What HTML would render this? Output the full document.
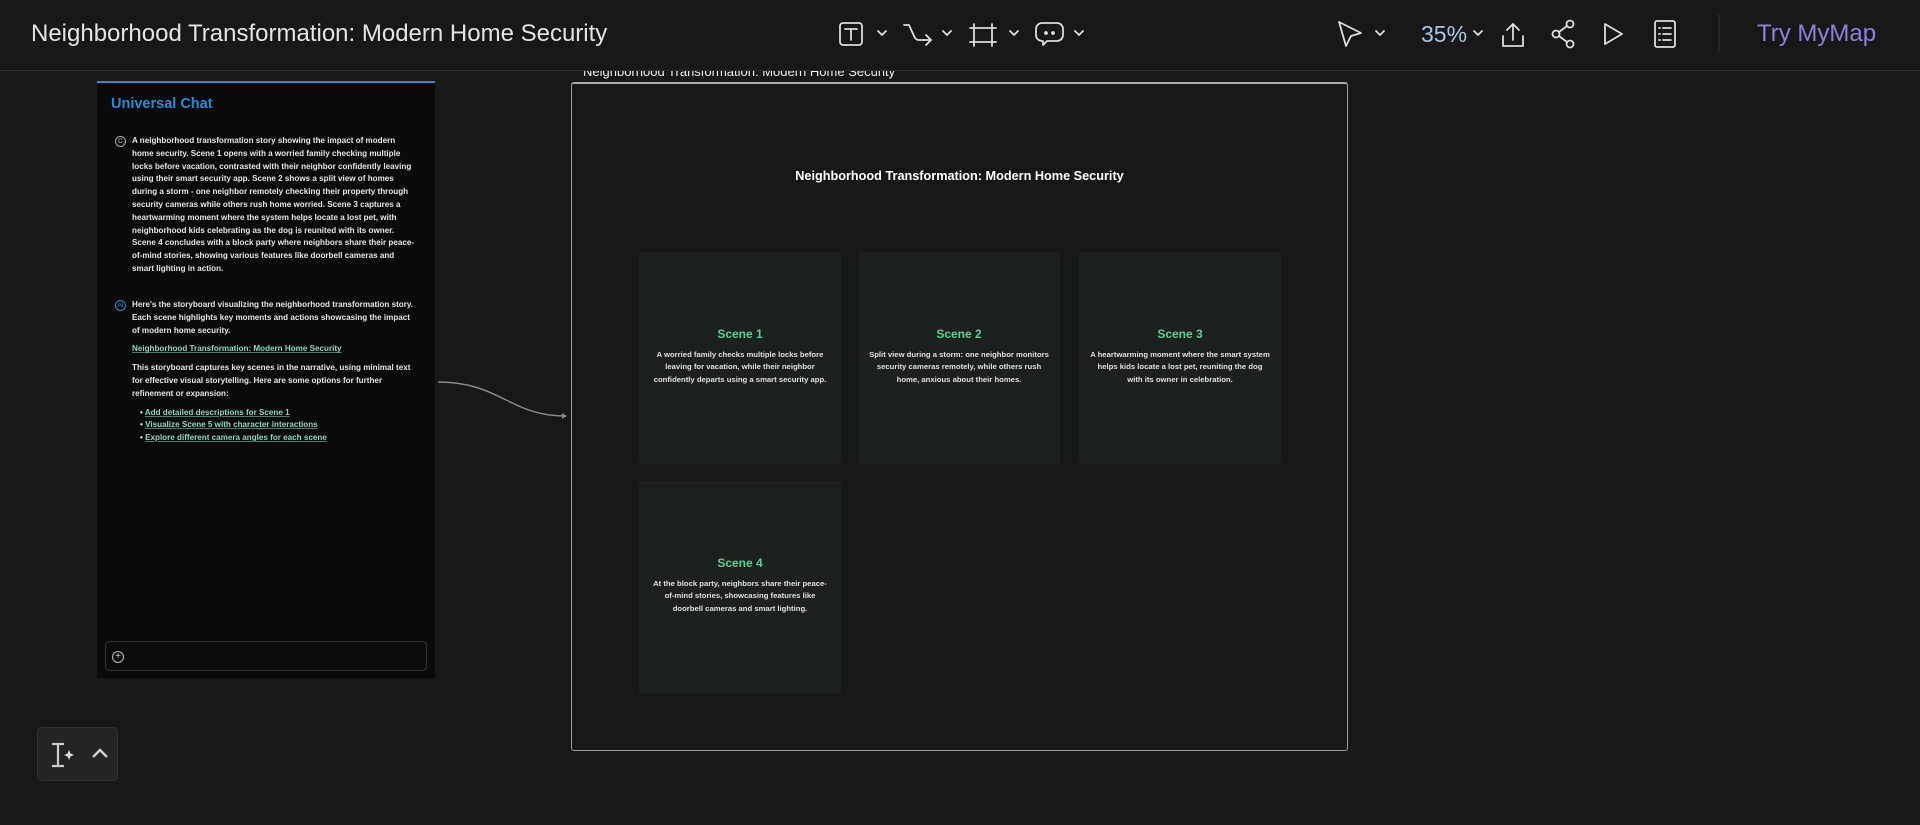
<!DOCTYPE html>
<html><head><meta charset="utf-8"><style>
*{margin:0;padding:0;box-sizing:border-box}
body{width:1920px;height:825px;background:#181818;font-family:"Liberation Sans",Arial,sans-serif;position:relative;overflow:hidden;color:#ddd}
.abs{position:absolute}
#hdr{left:0;top:0;width:1920px;height:71px;background:#181818;border-bottom:1px solid #2c2c2c;z-index:5}
.ttl{left:31px;top:20px;font-size:24px;color:#e4e4e4;white-space:nowrap}
svg{position:absolute;overflow:visible}
.chat{left:97px;top:81px;width:338px;height:597px;background:#0a0a0a;border-top:2px solid #2a8ad8}
.chat h3{position:absolute;left:14px;top:13px;font-size:14.5px;color:#2a8ad8;font-weight:bold}
.msg{position:absolute;left:35px;width:285px;font-size:8.1px;line-height:12.8px;color:#e6e6e6;font-weight:bold}
.lnk{color:#8fd6c3;text-decoration:underline;text-decoration-color:#4a7a6e}
.ic{position:absolute;left:-17px;top:1px;width:11px;height:11px;border:1px solid #aaa;border-radius:50%;font-size:6.5px;line-height:9px;text-align:center;font-weight:normal;color:#ccc}
.frame{left:571px;top:82px;width:777px;height:669px;border:1.5px solid #9a9a9a;border-top:2px solid #aaa;border-radius:3px;background:#181818}
.card{position:absolute;width:202px;height:212px;background:#1c201e;border-radius:2px;text-align:center}
.card h4{position:absolute;left:0;right:0;top:75px;font-size:12px;color:#5fcf8f;font-weight:bold}
.card p{position:absolute;left:10px;right:10px;top:97px;font-size:7.7px;line-height:12.4px;color:#e0e0e0;font-weight:bold}
</style></head><body>

<div class="abs" style="left:583px;top:64px;font-size:13px;color:#eee;white-space:nowrap;z-index:1">Neighborhood Transformation: Modern Home Security</div>
<div id="hdr" class="abs">
 <div class="abs ttl">Neighborhood Transformation: Modern Home Security</div>
 <svg width="1920" height="71" style="left:0;top:0" fill="none" stroke="#ddd" stroke-width="1.8" stroke-linecap="round" stroke-linejoin="round">
  <rect x="840" y="23" width="22" height="22" rx="3"/><path d="M845 29h12M851 29v11"/>
  <path d="M878 31l4 4 4-4M943 31l4 4 4-4M1010 31l4 4 4-4M1075 31l4 4 4-4M1376 31l4 4 4-4M1474 31l4 4 4-4"/>
  <path d="M904 25h5l5 11c1 3 3 4 5 4h12M926 35l5 5-5 5"/>
  <path d="M974 24v22M992 24v22M970 28h26M970 42h26"/>
  <path d="M1042 23h15a6 6 0 0 1 6 6v6a6 6 0 0 1-6 6h-10l-4 4v-4h-1a6 6 0 0 1-6-6v-6a6 6 0 0 1 6-6z"/>
  <circle cx="1046" cy="33" r="1" fill="#ddd"/><circle cx="1053" cy="33" r="1" fill="#ddd"/>
  <path d="M1339 22l22 11-10 3-5 10z"/>
  <path d="M1503 36v10h20V36M1513 40V24M1507 30l6-6 6 6"/>
  <circle cx="1570" cy="24" r="3.5"/><circle cx="1556" cy="34" r="3.5"/><circle cx="1570" cy="44" r="3.5"/><path d="M1559 32l8-6M1559 36l8 6"/>
  <path d="M1605 24l17 10-17 10z"/>
  <rect x="1655" y="21" width="20" height="26" rx="2"/><path d="M1659 28h1M1663 28h8M1659 34h1M1663 34h8M1659 40h1M1663 40h8"/>
  <path d="M1719 15v37" stroke="#333" stroke-width="1"/>
 </svg>
 <div class="abs" style="left:1421px;top:21px;font-size:23px;color:#aac6e8">35%</div>
 <div class="abs" style="left:1757px;top:20px;font-size:24px;color:#8d80df">Try MyMap</div>
</div>

<div class="abs chat">
 <h3>Universal Chat</h3>
 <div class="msg" style="top:52px"><span class="ic">C</span>A neighborhood transformation story showing the impact of modern home security. Scene 1 opens with a worried family checking multiple locks before vacation, contrasted with their neighbor confidently leaving using their smart security app. Scene 2 shows a split view of homes during a storm - one neighbor remotely checking their property through security cameras while others rush home worried. Scene 3 captures a heartwarming moment where the system helps locate a lost pet, with neighborhood kids celebrating as the dog is reunited with its owner. Scene 4 concludes with a block party where neighbors share their peace-of-mind stories, showing various features like doorbell cameras and smart lighting in action.</div>
 <div class="msg" style="top:216px"><span class="ic" style="border-color:#2a8ad8;color:#2a8ad8">AI</span>Here's the storyboard visualizing the neighborhood transformation story. Each scene highlights key moments and actions showcasing the impact of modern home security.
  <div class="lnk" style="margin-top:6px">Neighborhood Transformation: Modern Home Security</div>
  <div style="margin-top:6px">This storyboard captures key scenes in the narrative, using minimal text for effective visual storytelling. Here are some options for further refinement or expansion:</div>
  <div style="margin-top:6px;padding-left:8px">• <span class="lnk">Add detailed descriptions for Scene 1</span><br>• <span class="lnk">Visualize Scene 5 with character interactions</span><br>• <span class="lnk">Explore different camera angles for each scene</span></div>
 </div>
 <div class="abs" style="left:8px;top:558px;width:322px;height:30px;border:1px solid #333;border-radius:4px;background:#0b0b0b">
  <div class="abs" style="left:6px;top:9px;width:12px;height:12px;border:1px solid #bbb;border-radius:50%;font-size:10px;line-height:9px;text-align:center;color:#ccc">+</div>
 </div>
</div>

<svg width="1920" height="825" style="left:0;top:0">
 <path d="M438 382C500 382 510 416 565 416" fill="none" stroke="#888" stroke-width="1.5"/>
 <path d="M562 413l5 3-5 3z" fill="#888"/>
</svg>

<div class="abs frame">
 <div class="abs" style="left:0;right:0;top:85px;text-align:center;font-size:12.7px;font-weight:bold;color:#fff">Neighborhood Transformation: Modern Home Security</div>
 <div class="card" style="left:67px;top:168px"><h4>Scene 1</h4><p>A worried family checks multiple locks before leaving for vacation, while their neighbor confidently departs using a smart security app.</p></div>
 <div class="card" style="left:286px;top:168px"><h4>Scene 2</h4><p>Split view during a storm: one neighbor monitors security cameras remotely, while others rush home, anxious about their homes.</p></div>
 <div class="card" style="left:507px;top:168px"><h4>Scene 3</h4><p>A heartwarming moment where the smart system helps kids locate a lost pet, reuniting the dog with its owner in celebration.</p></div>
 <div class="card" style="left:67px;top:397px"><h4>Scene 4</h4><p>At the block party, neighbors share their peace-of-mind stories, showcasing features like doorbell cameras and smart lighting.</p></div>
</div>

<div class="abs" style="left:37px;top:727px;width:81px;height:54px;background:#242424;border:1px solid #333;border-radius:5px">
 <svg width="81" height="54" style="left:0;top:0" fill="none" stroke="#ccc" stroke-width="2.2">
  <path d="M14 16h12M14 38h12M20 16v22"/>
  <path d="M31 22l1.5 3.5 3.5 1.5-3.5 1.5-1.5 3.5-1.5-3.5-3.5-1.5 3.5-1.5z" fill="#ddd" stroke="none"/>
  <path d="M55 29l7-7 7 7" stroke-width="2.5"/>
 </svg>
</div>
</body></html>
